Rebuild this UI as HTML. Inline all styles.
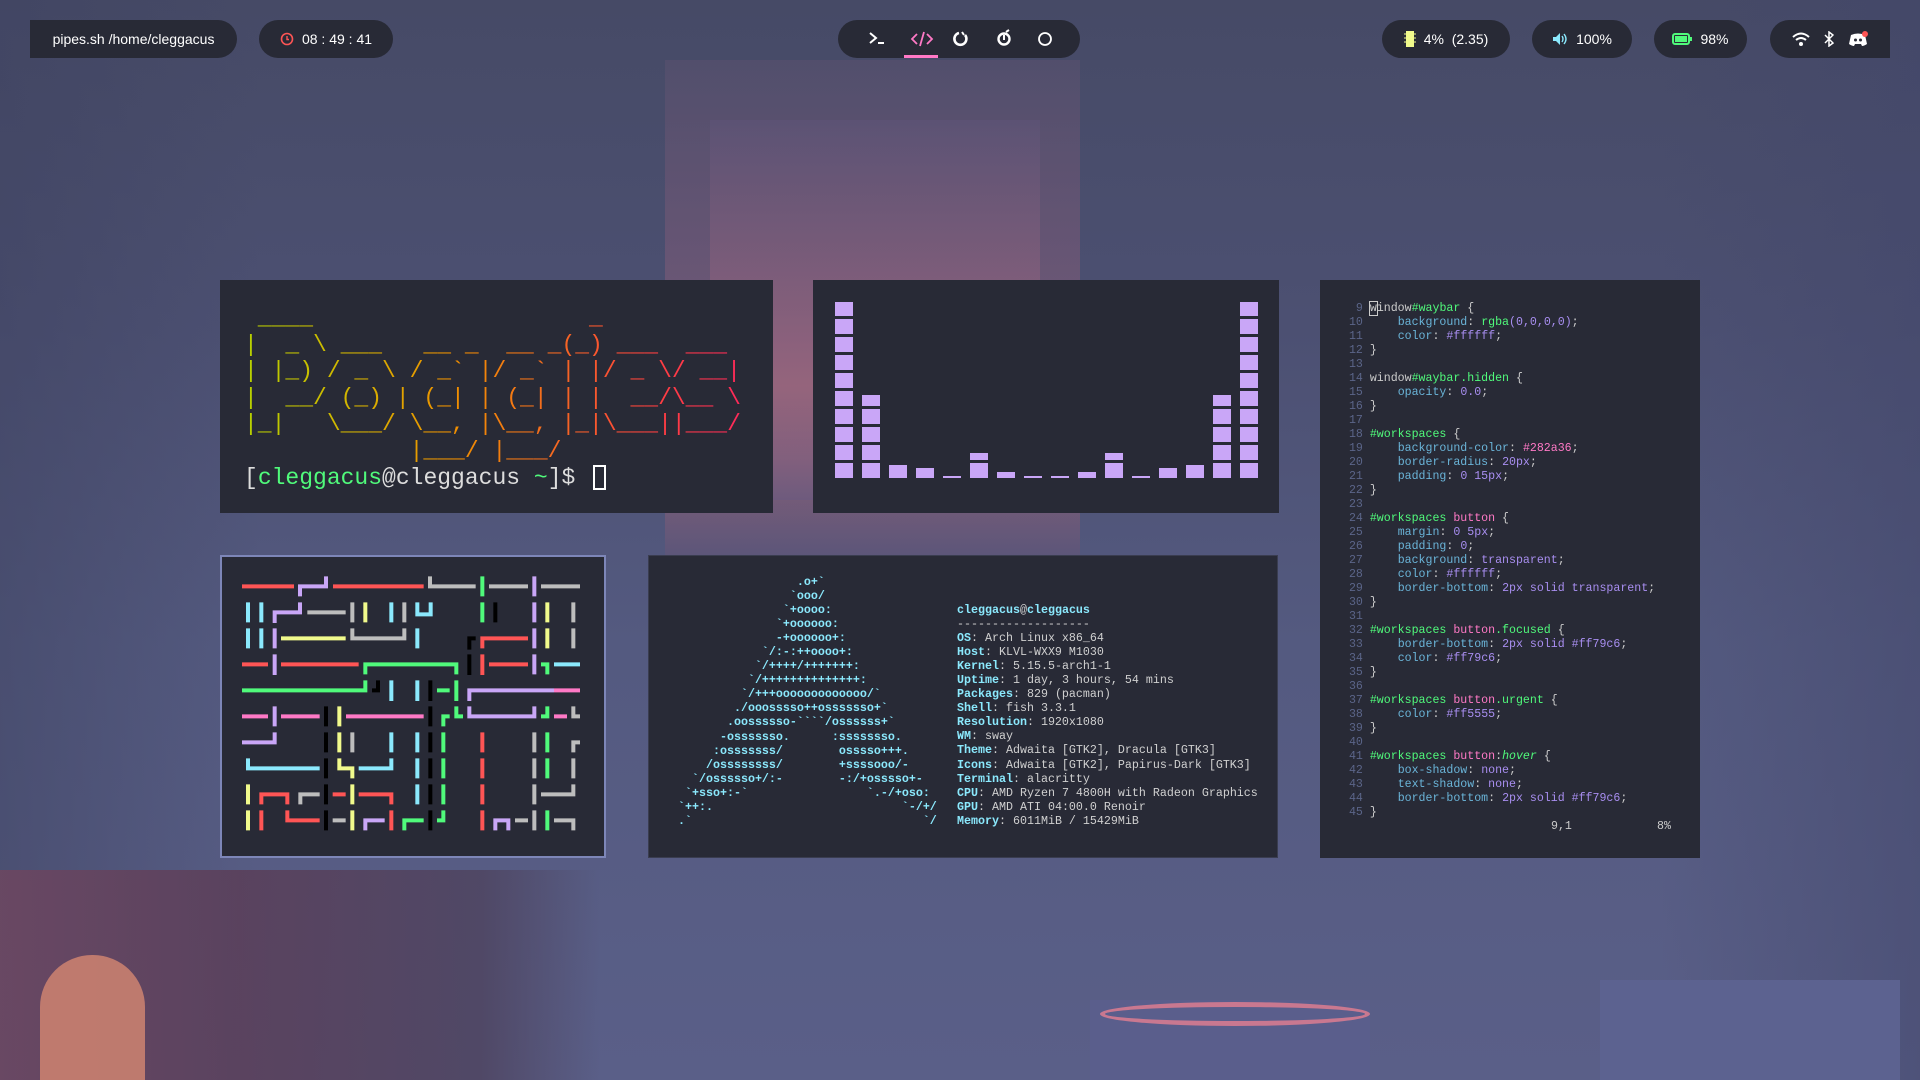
<!DOCTYPE html>
<html><head><meta charset="utf-8">
<style>
*{margin:0;padding:0;box-sizing:border-box}
body{width:1920px;height:1080px;overflow:hidden;position:relative;font-family:"Liberation Sans",sans-serif;
background:linear-gradient(180deg,#464a66 0%,#4c5072 30%,#545a80 60%,#5a5f88 100%);}
.bg{position:absolute}
.pill{position:absolute;top:20px;height:38px;background:#282a36;border-radius:19px;color:#fff;font-size:14px;display:flex;align-items:center;justify-content:center;gap:8px}
.win{position:absolute;background:#282a36;overflow:hidden}
pre{font-family:"Liberation Mono",monospace;position:absolute;white-space:pre}
.c{color:#50fa7b}.k{color:#8be9fd;font-weight:bold}
.vim pre{font-size:11.6px;line-height:14px;color:#ccc}
.n{color:#5b6589}.g{color:#50fa7b}.p{color:#ff79c6}.pr{color:#6ab4d8}.v{color:#a88ef0}
</style></head><body>
<!-- background shapes -->
<div class="bg" style="left:665px;top:60px;width:415px;height:500px;background:linear-gradient(180deg,#56506e,#7a5a78 50%,#9a6478 80%,#5e5478);opacity:.7"></div>
<div class="bg" style="left:710px;top:120px;width:330px;height:380px;background:linear-gradient(180deg,#5e5478,#a86a80 70%,#6a5a80);opacity:.6"></div>
<div class="bg" style="left:0;top:0;width:260px;height:1080px;background:linear-gradient(90deg,#3e4260,transparent);opacity:.5"></div>
<div class="bg" style="left:1660px;top:0;width:260px;height:1080px;background:linear-gradient(270deg,#42466a,transparent);opacity:.5"></div>
<div class="bg" style="left:0;top:870px;width:600px;height:210px;background:linear-gradient(90deg,#6e4660,#5a3e58 40%,#4e4460 80%,transparent);opacity:.85"></div>
<div class="bg" style="left:40px;top:955px;width:105px;height:125px;background:#c98070;border-radius:52px 52px 0 0;opacity:.9"></div>
<div class="bg" style="left:1090px;top:1000px;width:280px;height:80px;background:#5a5e8c"></div>
<div class="bg" style="left:1100px;top:1002px;width:270px;height:24px;border:5px solid #c97890;border-radius:50%"></div>
<div class="bg" style="left:1600px;top:980px;width:300px;height:100px;background:#5c6290"></div>

<!-- top bar -->
<div class="pill" style="left:30px;width:207px;border-radius:0 19px 19px 0">pipes.sh /home/cleggacus</div>
<div class="pill" style="left:259px;width:134px"><svg width="14" height="14" viewBox="0 0 14 14"><circle cx="7" cy="7" r="5.5" fill="none" stroke="#ff5555" stroke-width="1.6"/><path d="M7 4v3.5h2" stroke="#ff5555" stroke-width="1.4" fill="none"/></svg><span>08 : 49 : 41</span></div>
<div class="pill" style="left:838px;width:242px;gap:0">
<svg width="242" height="38" viewBox="0 0 242 38">
<path d="M32 13l6 5-6 5" stroke="#fff" stroke-width="2" fill="none"/><path d="M40 23h6" stroke="#fff" stroke-width="2"/>
<path d="M79 14l-5 5 5 5M89 14l5 5-5 5M86 12l-4 14" stroke="#ff79c6" stroke-width="1.8" fill="none"/>
<rect x="66" y="35" width="34" height="3" fill="#ff79c6"/>
<path d="M121 13a6 6 0 1 0 6 2" stroke="#fff" stroke-width="2.6" fill="none"/><path d="M124 12l2 3" stroke="#fff" stroke-width="2"/>
<circle cx="166" cy="19" r="5.5" stroke="#fff" stroke-width="2.4" fill="none"/><path d="M168 12l3-2M166 15v5" stroke="#fff" stroke-width="2"/>
<circle cx="207" cy="19" r="6" stroke="#fff" stroke-width="1.8" fill="none"/>
</svg></div>
<div class="pill" style="left:1382px;width:128px"><svg width="12" height="18"><rect x="2" y="1" width="8" height="16" fill="#f1fa8c"/><path d="M0 4h2M0 8h2M0 12h2M10 4h2M10 8h2M10 12h2" stroke="#f1fa8c"/></svg><span>4%&nbsp; (2.35)</span></div>
<div class="pill" style="left:1532px;width:100px"><svg width="16" height="14"><path d="M1 5h3l4-4v12l-4-4H1z" fill="#8be9fd"/><path d="M10 4q2 3 0 6M12 2q4 5 0 10" stroke="#8be9fd" fill="none" stroke-width="1.4"/></svg><span>100%</span></div>
<div class="pill" style="left:1654px;width:93px"><svg width="20" height="12"><rect x="1" y="1" width="16" height="10" rx="2" fill="none" stroke="#50fa7b" stroke-width="2"/><rect x="3" y="3" width="12" height="6" fill="#50fa7b"/><rect x="18" y="4" width="2" height="4" fill="#50fa7b"/></svg><span>98%</span></div>
<div class="pill" style="left:1770px;width:120px;border-radius:19px 0 0 19px;gap:14px">
<svg width="18" height="14"><path d="M1 5q8-7 16 0M4 8q5-4 10 0" stroke="#fff" stroke-width="2" fill="none"/><circle cx="9" cy="12" r="2" fill="#fff"/></svg>
<svg width="10" height="16"><path d="M1 4l8 8-4 3V1l4 3-8 8" stroke="#fff" stroke-width="1.5" fill="none"/></svg>
<svg width="20" height="16"><path d="M3 4q7-3 14 0l2 9q-3 2-5 2l-1-2h-6l-1 2q-2 0-5-2z" fill="#fff"/><circle cx="7.5" cy="9" r="1.5" fill="#282a36"/><circle cx="12.5" cy="9" r="1.5" fill="#282a36"/><circle cx="17" cy="3" r="3" fill="#ff5555"/></svg>
</div>

<!-- terminal Poggies -->
<div class="win" style="left:220px;top:280px;width:553px;height:233px"></div>
<pre style="left:244px;top:305px;font-size:23px;line-height:26.6px;background:linear-gradient(90deg,#b6d100 0%,#d4b400 22%,#f09000 42%,#f56a20 62%,#ff4040 82%,#ff2a5a 100%);-webkit-background-clip:text;background-clip:text;color:transparent"> ____                    _
|  _ \ ___   __ _  __ _(_) ___  ___
| |_) / _ \ / _&#96; |/ _&#96; | |/ _ \/ __|
|  __/ (_) | (_| | (_| | |  __/\__ \
|_|   \___/ \__, |\__, |_|\___||___/
            |___/ |___/</pre>
<pre style="left:244px;top:464.6px;font-size:23px;line-height:26.6px;color:#ddd">[<span class="c">cleggacus</span>@cleggacus <span class="c">~</span>]$ </pre>
<div style="position:absolute;left:593px;top:465px;width:13px;height:25px;border:2px solid #fff"></div>

<!-- cava -->
<div class="win" style="left:813px;top:280px;width:466px;height:233px">
<svg width="470" height="240" style="position:absolute;left:-3px;top:-2px">
<defs><pattern id="seg" patternUnits="userSpaceOnUse" x="0" y="5" width="470" height="18"><rect x="0" y="0" width="470" height="15" fill="#c9a6f7"/></pattern></defs>
<g fill="url(#seg)">
<rect x="25" y="24" width="18" height="177"/>
<rect x="52" y="117" width="18" height="84"/>
<rect x="79" y="187" width="18" height="14"/>
<rect x="106" y="190" width="18" height="11"/>
<rect x="133" y="198" width="18" height="3"/>
<rect x="160" y="175" width="18" height="26"/>
<rect x="187" y="194" width="18" height="7"/>
<rect x="214" y="198" width="18" height="3"/>
<rect x="241" y="198" width="18" height="3"/>
<rect x="268" y="194" width="18" height="7"/>
<rect x="295" y="175" width="18" height="26"/>
<rect x="322" y="198" width="18" height="3"/>
<rect x="349" y="190" width="18" height="11"/>
<rect x="376" y="187" width="18" height="14"/>
<rect x="403" y="117" width="18" height="84"/>
<rect x="430" y="24" width="18" height="177"/>
</g></svg></div>

<!-- pipes -->
<div class="win" style="left:220px;top:555px;width:386px;height:303px;border:2px solid #7d86b8"></div>
<svg style="position:absolute;left:218px;top:553px" width="392" height="308" viewBox="0 0 1176 924" fill="none" stroke-width="12">
<g stroke="#ff5555"><path d="M72 100H228M345 100H617M72 334H150M189 334H422M793 286V256H930M793 304V366M813 334H930M130 754V724H208V754M422 724H520V754M344 724H383M208 772V802H305M130 772V832M520 772V832M793 538V598M793 616V676M793 694V754M793 772V832"/></g>
<g stroke="#c9a6f7"><path d="M246 130V100H324V70M170 210V178H246V148M170 226V286M170 304V366M754 444V412H1008M754 460V490H949V460M72 568H170V538M170 460V520M442 832V802H500M832 832V802H871V832M949 70V130M949 148V208M949 226V286M949 304V364"/></g>
<g stroke="#bdbdbd"><path d="M636 70V100H773M813 100H930M969 100H1086M268 178H383M403 148V208M559 148V208M403 226V256H559V226M1066 148V208M1066 226V286M1066 460V490H1086M403 538V598M1066 598V568H1086M1066 616V676M949 538V598M949 616V676M949 694V754M969 724H1066V694M247 754V724H305M344 802H383M891 802H930M949 772V832M1008 802H1066V832"/></g>
<g stroke="#50fa7b"><path d="M793 70V130M793 148V208M442 364V334H715V364M72 412H442V382M657 412H695M715 382V444M676 520V490H695M715 460V490H735M988 460V490H969M969 334H988V364M676 538V598M676 616V676M676 694V754M559 832V802H617M657 802H676V772M988 538V598M988 616V676M988 772V832"/></g>
<g stroke="#8be9fd"><path d="M90 148V208M130 148V208M90 226V286M130 226V286M520 148V208M598 148V184H638V148M598 226V286M1008 334H1086M520 382V444M598 382V444M520 538V598M598 538V598M90 616V646H305M422 646H520V616M598 616V676M598 694V754"/></g>
<g stroke="#f1fa8c"><path d="M442 148V208M189 256H383M988 148V208M988 226V286M364 460V520M364 538V598M364 616V646H403V676M403 694V754M90 694V754M90 772V832M403 772V832"/></g>
<g stroke="#ff79c6"><path d="M1008 412H1086M72 490H150M189 490H305M384 490H617M1008 490H1047"/></g>
<g stroke="#000"><path d="M832 148V208M754 290V256H773M754 304V366M462 412H480V382M637 382V444M324 460V520M637 460V520M324 538V598M637 538V598M324 616V676M637 616V676M324 694V754M637 694V754M324 772V832M637 772V832"/></g>
</svg>

<!-- neofetch -->
<div class="win" style="left:648px;top:555px;width:630px;height:303px;border:1px solid #3a3d50"></div>
<pre style="left:671px;top:575px;font-size:11.67px;line-height:14.05px;color:#8be9fd;font-weight:bold">                  .o+&#96;
                 &#96;ooo/
                &#96;+oooo:
               &#96;+oooooo:
               -+oooooo+:
             &#96;/:-:++oooo+:
            &#96;/++++/+++++++:
           &#96;/++++++++++++++:
          &#96;/+++ooooooooooooo/&#96;
         ./ooosssso++osssssso+&#96;
        .oossssso-&#96;&#96;&#96;&#96;/ossssss+&#96;
       -osssssso.      :ssssssso.
      :osssssss/        osssso+++.
     /ossssssss/        +ssssooo/-
   &#96;/ossssso+/:-        -:/+osssso+-
  &#96;+sso+:-&#96;                 &#96;.-/+oso:
 &#96;++:.                           &#96;-/+/
 .&#96;                                 &#96;/</pre>
<div style="position:absolute;left:957px;top:603px;width:320px;height:250px;overflow:hidden">
<pre style="left:0;top:0;font-size:11.67px;line-height:14.05px;color:#d0d0d0"><span class="k">cleggacus</span>@<span class="k">cleggacus</span>
-------------------
<span class="k">OS</span>: Arch Linux x86_64
<span class="k">Host</span>: KLVL-WXX9 M1030
<span class="k">Kernel</span>: 5.15.5-arch1-1
<span class="k">Uptime</span>: 1 day, 3 hours, 54 mins
<span class="k">Packages</span>: 829 (pacman)
<span class="k">Shell</span>: fish 3.3.1
<span class="k">Resolution</span>: 1920x1080
<span class="k">WM</span>: sway
<span class="k">Theme</span>: Adwaita [GTK2], Dracula [GTK3]
<span class="k">Icons</span>: Adwaita [GTK2], Papirus-Dark [GTK3]
<span class="k">Terminal</span>: alacritty
<span class="k">CPU</span>: AMD Ryzen 7 4800H with Radeon Graphics
<span class="k">GPU</span>: AMD ATI 04:00.0 Renoir
<span class="k">Memory</span>: 6011MiB / 15429MiB</pre></div>

<!-- vim -->
<div class="win vim" style="left:1320px;top:280px;width:380px;height:578px">
<pre style="left:22px;top:22px"><span class="n">  9 </span><span style="outline:1px solid #ccc">w</span>indow<span class="g">#waybar</span> {
<span class="n"> 10 </span>    <span class="pr">background</span>: <span class="g">rgba</span><span class="v">(0,0,0,0)</span>;
<span class="n"> 11 </span>    <span class="pr">color</span>: <span class="v">#ffffff</span>;
<span class="n"> 12 </span>}
<span class="n"> 13 </span>
<span class="n"> 14 </span>window<span class="g">#waybar</span><span class="g">.hidden</span> {
<span class="n"> 15 </span>    <span class="pr">opacity</span>: <span class="v">0.0</span>;
<span class="n"> 16 </span>}
<span class="n"> 17 </span>
<span class="n"> 18 </span><span class="g">#workspaces</span> {
<span class="n"> 19 </span>    <span class="pr">background-color</span>: <span class="p">#282a36</span>;
<span class="n"> 20 </span>    <span class="pr">border-radius</span>: <span class="v">20px</span>;
<span class="n"> 21 </span>    <span class="pr">padding</span>: <span class="v">0 15px</span>;
<span class="n"> 22 </span>}
<span class="n"> 23 </span>
<span class="n"> 24 </span><span class="g">#workspaces</span> <span class="p">button</span> {
<span class="n"> 25 </span>    <span class="pr">margin</span>: <span class="v">0 5px</span>;
<span class="n"> 26 </span>    <span class="pr">padding</span>: <span class="v">0</span>;
<span class="n"> 27 </span>    <span class="pr">background</span>: <span class="v">transparent</span>;
<span class="n"> 28 </span>    <span class="pr">color</span>: <span class="v">#ffffff</span>;
<span class="n"> 29 </span>    <span class="pr">border-bottom</span>: <span class="v">2px solid transparent</span>;
<span class="n"> 30 </span>}
<span class="n"> 31 </span>
<span class="n"> 32 </span><span class="g">#workspaces</span> <span class="p">button</span><span class="g">.focused</span> {
<span class="n"> 33 </span>    <span class="pr">border-bottom</span>: <span class="v">2px solid #ff79c6</span>;
<span class="n"> 34 </span>    <span class="pr">color</span>: <span class="v">#ff79c6</span>;
<span class="n"> 35 </span>}
<span class="n"> 36 </span>
<span class="n"> 37 </span><span class="g">#workspaces</span> <span class="p">button</span><span class="g">.urgent</span> {
<span class="n"> 38 </span>    <span class="pr">color</span>: <span class="v">#ff5555</span>;
<span class="n"> 39 </span>}
<span class="n"> 40 </span>
<span class="n"> 41 </span><span class="g">#workspaces</span> <span class="p">button</span>:<span class="g" style="font-style:italic">hover</span> {
<span class="n"> 42 </span>    <span class="pr">box-shadow</span>: <span class="v">none</span>;
<span class="n"> 43 </span>    <span class="pr">text-shadow</span>: <span class="v">none</span>;
<span class="n"> 44 </span>    <span class="pr">border-bottom</span>: <span class="v">2px solid #ff79c6</span>;
<span class="n"> 45 </span>}</pre>
<pre style="left:231px;top:540px">9,1</pre>
<pre style="left:337px;top:540px">8%</pre>
</div>
</body></html>
